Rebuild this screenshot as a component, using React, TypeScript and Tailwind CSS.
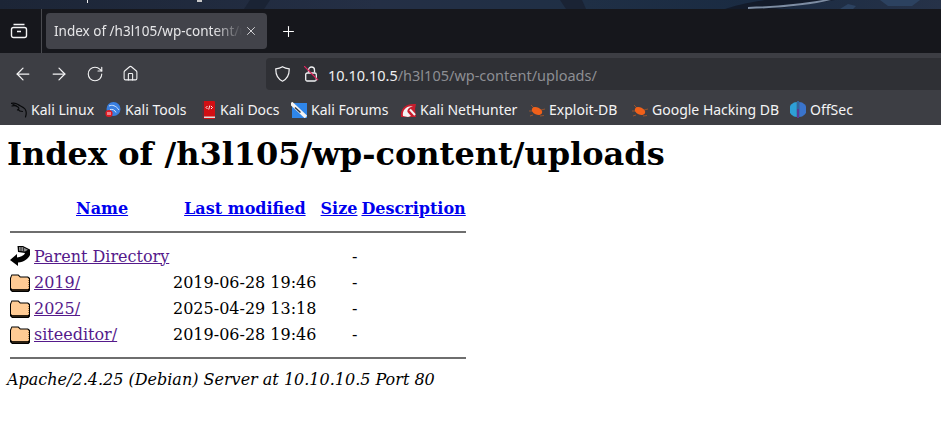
import { ArrowLeft, ArrowRight, RotateCw, House, Plus, X } from "lucide-react";

const bookmarks = [
  { label: "Kali Linux", icon: <KaliDragon />, width: "w-[62px]" },
  { label: "Kali Tools", icon: <KaliTools />, width: "w-[63px]" },
  { label: "Kali Docs", icon: <KaliDocs />, width: "w-[59px]" },
  { label: "Kali Forums", icon: <KaliForums />, width: "w-[77px]" },
  { label: "Kali NetHunter", icon: <NetHunter />, width: "w-[97px]" },
  { label: "Exploit-DB", icon: <Bug />, width: "w-[71px]" },
  { label: "Google Hacking DB", icon: <Bug />, width: "w-[126px]" },
  { label: "OffSec", icon: <OffSec />, width: "w-[44px]" },
];

const rows = [
  { name: "2019/", date: "2019-06-28 19:46" },
  { name: "2025/", date: "2025-04-29 13:18" },
  { name: "siteeditor/", date: "2019-06-28 19:46" },
];

function Wallpaper() {
  return (
    <svg width="941" height="9" viewBox="0 0 941 9" className="block">
      <defs>
        <linearGradient id="wall" x1="0" x2="1" y1="0" y2="0">
          <stop offset="0" stopColor="#1c2536" />
          <stop offset="0.4" stopColor="#242f45" />
          <stop offset="0.62" stopColor="#1f2f45" />
          <stop offset="0.8" stopColor="#1a2b42" />
          <stop offset="1" stopColor="#263248" />
        </linearGradient>
      </defs>
      <rect width="941" height="9" fill="url(#wall)" />
      <path d="M250 0h20l-6 9h-20zM560 0h22l4 9h-20z" fill="#1a2334" />
      <path d="M725 9c8-3 20-6 40-9h70c-20 3-40 6-60 9z" fill="#131b2a" />
      <path d="M748 7c30-1 50-3 75-7h8c-20 5-50 8-83 9z" fill="#7d8da3" />
      <path d="M840 9l8-5 8 2-3 3zM880 0h40l-8 6h-24z" fill="#2c4260" />
      {/* bits of the clipped window title */}
      <rect x="87" y="0" width="1" height="3" fill="#f0f0f0" />
      <rect x="197" y="0" width="5" height="2" fill="#c8c8c8" />
    </svg>
  );
}

function KaliDragon() {
  return (
    <svg width="16" height="16" viewBox="0 0 16 16" fill="none" stroke="#08090b" strokeWidth="1.2" strokeLinecap="round">
      <path d="M0 1.500c3-1 5-.5 7 1s5 2 7 4.500c1.500 2 1.500 5 .5 8" />
      <path d="M1 4c2-.8 4-.5 6 1 1.500 1.200 1 2.500 -.5 3" />
      <path d="M7 7.500c1 1.500 3 2 4.500 2" />
      <path d="M2 2.500l3 1" />
    </svg>
  );
}

function KaliTools() {
  return (
    <svg width="16" height="17" viewBox="0 0 16 17">
      <circle cx="8.500" cy="8" r="7" fill="#3a7fe0" />
      <path d="M4 5c3-1.500 7-.5 10 4M5 8.500c2.500-.5 5 .5 6 3" stroke="#d4e5fb" strokeWidth="1" fill="none" />
      <circle cx="4" cy="12.500" r="3.600" fill="#e01b24" />
      <path d="M3 11v3M5 11v3" stroke="#fff" strokeWidth="0.9" />
    </svg>
  );
}

function KaliDocs() {
  return (
    <svg width="16" height="18" viewBox="0 0 16 18">
      <rect x="2" y="0" width="13" height="18" rx="1" fill="#d10f14" />
      <rect x="2" y="0" width="2" height="18" fill="#59303c" />
      <rect x="4" y="15.500" width="11" height="1.500" fill="#dcdcdc" />
      <path d="M7.500 5 6 6.500 7.500 8M11 5l1.500 1.500L11 8M9.800 4.500 8.700 8.500" stroke="#fff" strokeWidth="0.9" fill="none" />
    </svg>
  );
}

function KaliForums() {
  return (
    <svg width="16" height="16" viewBox="0 0 16 16">
      <path d="M3 1h13v15H1V5z" fill="#2f86ea" />
      <path d="M0 1 15 15" stroke="#f4f4f4" strokeWidth="3.600" />
      <path d="M4 5.500 9.500 10.500" stroke="#2a3340" strokeWidth="1.400" />
    </svg>
  );
}

function NetHunter() {
  return (
    <svg width="16" height="16" viewBox="0 0 16 16">
      <path d="M1 15C0 7 5 1 16 2l-1 5 1 8H1z" fill="#c81e2e" />
      <path d="M3 14C2 8 7 3 13 4.500 9 5 7 7.500 7.500 10L11 14 8 15z" fill="#f3f3f3" />
      <path d="M10 7.500l5 5.500" stroke="#f3f3f3" strokeWidth="2" />
    </svg>
  );
}

function Bug() {
  return (
    <svg width="16" height="16" viewBox="0 0 16 16" stroke="#a8582c" strokeWidth="0.8">
      <path d="M2 3l4 4M0 9h4M11 14l4-.5M12 8l4-1M4 13l-3 1" fill="none" />
      <ellipse cx="8" cy="9" rx="5.500" ry="3.600" fill="#f0601a" stroke="none" transform="rotate(25 8 9)" />
    </svg>
  );
}

function OffSec() {
  return (
    <svg width="16" height="17" viewBox="0 0 16 17">
      <path d="M6.800 1A7.500 7.500 0 0 0 6.800 16z" fill="#2e9fd6" />
      <path d="M9.200 1A7.500 7.500 0 0 1 9.200 16z" fill="#3a74cc" />
      <rect x="7.400" y="0" width="1.200" height="8" fill="#2f7fcf" />
      <rect x="7.400" y="8" width="1.200" height="9" fill="#6d35c9" />
    </svg>
  );
}

function FolderIcon() {
  return (
    <svg width="20" height="20" viewBox="0 0 20 20" className="shrink-0">
      <path d="M0 6 1.500 2.500H8.500L10.500 4.500H18L20 6V18.500L18.500 20H2L0 18z" fill="#000" />
      <path d="M1 6.500 2 3.500H8L10 5.500H17.500L19 7V16.500L18 17H2L1 16z" fill="#ffcb94" />
      <path d="M2.500 18h16" stroke="#a97b45" strokeDasharray="1 1" />
      <path d="M18.500 8v9" stroke="#a97b45" strokeDasharray="1 1" />
    </svg>
  );
}

function BackIcon() {
  return (
    <svg width="20" height="20" viewBox="0 0 20 20" className="shrink-0">
      <path d="M7.500 0H13L20 3.500V9C18 13 14 16 8 16.500V20L0 14 7 8V11.500C11 11 14 9.500 15 7L8 6z" fill="#000" />
      <path d="M9 1h3.500L18 3.800 15 5.500 9 4.800z" fill="#8c8c8c" />
      <path d="M11 1v4M13.500 1.500v4" stroke="#1a1a1a" strokeWidth="0.8" />
    </svg>
  );
}

function ShieldIcon() {
  return (
    <svg width="15" height="16" viewBox="0 0 15 16" fill="none" stroke="#f1f1f3" strokeWidth="1.200" className="shrink-0">
      <path d="M7.500 .8C9.500 2 11.500 2.600 14.200 2.800 14.400 9 12 13 7.500 15.200 3 13 .6 9 .8 2.800 3.500 2.600 5.500 2 7.500 .8z" />
    </svg>
  );
}

function InsecureLockIcon() {
  return (
    <svg width="15" height="16" viewBox="0 0 15 16" fill="none" className="shrink-0">
      <path d="M4.500 6.500V4A3 3 0 0 1 10.500 4V6.500" stroke="#f1f1f3" strokeWidth="1.300" />
      <rect x="1.700" y="7" width="10.600" height="8" rx="1.500" stroke="#f1f1f3" strokeWidth="1.300" />
      <path d="M0 0 14 14" stroke="#e0245e" strokeWidth="1.200" />
    </svg>
  );
}

export default function App() {
  return (
    <div className="h-[422px] w-[941px] overflow-hidden bg-white">
      <Wallpaper />

      <div className="flex h-[44px] items-center bg-[#16171c] font-['Noto_Sans',sans-serif] text-[#e6e6e8]">
        <div className="flex h-[44px] w-[42px] items-center justify-center border-r border-[#4a4b50] pr-[4px]">
          <svg width="18" height="18" viewBox="0 0 18 18" fill="none" stroke="#f4f4f5" strokeWidth="1.400">
            <rect x="1.500" y="5.500" width="15" height="10" rx="2" />
            <path d="M3.500 2.500h11M7 9.500h4" />
          </svg>
        </div>
        <div className="ml-[4px] flex h-[36px] w-[221px] items-center rounded-[4px] bg-[#42434a] pl-[8px] pr-[5px]">
          <span className="w-[188px] overflow-hidden whitespace-nowrap text-[13.5px] [mask-image:linear-gradient(90deg,#000_85%,transparent)]">
            Index of /h3l105/wp-content/uploads
          </span>
          <X size={14} strokeWidth={1.5} className="ml-[2px]" />
        </div>
        <Plus size={17} strokeWidth={1.5} className="ml-[13px] text-white" />
      </div>

      <div className="flex h-[37px] items-end bg-[#3d3e44] text-[#f4f4f5]">
        <div className="flex h-[37px] w-[266px] items-center pt-[4px]">
          <ArrowLeft size={20} strokeWidth={1.5} className="ml-[13px]" />
          <ArrowRight size={20} strokeWidth={1.5} className="ml-[16px]" />
          <RotateCw size={18} strokeWidth={1.5} className="ml-[17px]" />
          <House size={17} strokeWidth={1.5} className="ml-[18px]" />
        </div>
        <div className="flex h-[32px] flex-1 items-center rounded-l-[4px] bg-[#2f3035] pl-[9px] font-['Noto_Sans',sans-serif] text-[14.5px]">
          <ShieldIcon />
          <span className="ml-[14px] flex">
            <InsecureLockIcon />
          </span>
          <span className="ml-[9px] mt-[4px] whitespace-nowrap text-[#f0f0f2]">
            10.10.10.5<span className="text-[#8d8e93]">/h3l105/wp-content/uploads/</span>
          </span>
        </div>
      </div>

      <div className="flex h-[35px] items-center bg-[#3d3e44] pl-[11px] pt-[4px] font-['Noto_Sans',sans-serif] text-[14px] text-[#f4f4f5]">
        {bookmarks.map((b) => (
          <div className="mr-[12px] flex items-center gap-[4px] whitespace-nowrap" key={b.label}>
            {b.icon}
            <span className={b.width}>{b.label}</span>
          </div>
        ))}
      </div>

      <div className="font-['DejaVu_Serif',serif] text-[16px] leading-[19px] text-black">
        <h1 className="ml-[7px] mt-[10px] whitespace-nowrap text-[32px] font-bold leading-[38px]">
          Index of /h3l105/wp-content/uploads
        </h1>
        <div className="ml-[10px] mt-[26px] w-[456px]">
          <div className="flex whitespace-nowrap font-bold text-[#0000ee] underline">
            <span className="ml-[66px]">Name</span>
            <span className="ml-[56px]">Last modified</span>
            <span className="ml-[15px]">Size</span>
            <span className="ml-[4px]">Description</span>
          </div>
          <div className="mb-[10px] mt-[13px] h-[2px] bg-[#6e6e6e]" />
          <div className="flex h-[26px] items-center">
            <BackIcon />
            <a className="ml-[4px] w-[139px] whitespace-nowrap text-[#551a8b] underline">Parent Directory</a>
            <span className="ml-[179px]">-</span>
          </div>
          {rows.map((r) => (
            <div className="flex h-[26px] items-center" key={r.name}>
              <FolderIcon />
              <a className="ml-[4px] w-[139px] text-[#551a8b] underline">{r.name}</a>
              <span className="w-[179px] whitespace-nowrap">{r.date}</span>
              <span>-</span>
            </div>
          ))}
          <div className="mt-[10px] h-[2px] bg-[#6e6e6e]" />
        </div>
        <address className="ml-[7px] mt-[11px] italic">Apache/2.4.25 (Debian) Server at 10.10.10.5 Port 80</address>
      </div>
    </div>
  );
}
